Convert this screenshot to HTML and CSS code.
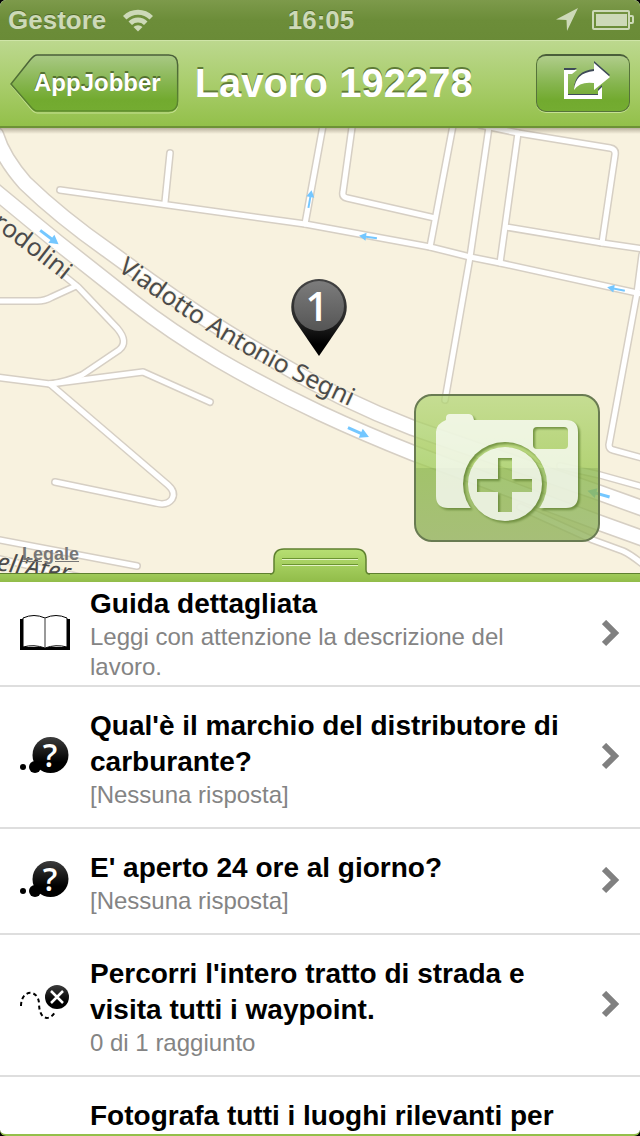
FILE: index.html
```html
<!DOCTYPE html>
<html lang="it">
  <head>
    <meta charset="UTF-8" />
    <meta name="viewport" content="width=device-width, initial-scale=1.0" />
    <title>Lavoro 192278</title>
    <link rel="stylesheet" href="styles.css">
  </head>
  <body>
    <div class="screen">
      <div class="status-bar">
        <div class="status-left">
          <span>Gestore</span>
          <svg class="wifi" width="32" height="24" viewBox="0 0 32 24">
            <path d="M1 8 A21 21 0 0 1 31 8 L27.500 11.500 A16.500 16.500 0 0 0 4.500 11.500 Z" />
            <path d="M6.500 13.500 A13.500 13.500 0 0 1 25.500 13.500 L22 17 A8.500 8.500 0 0 0 10 17 Z" />
            <path d="M11.500 19 A6.500 6.500 0 0 1 20.500 19 L16 23.500 Z" />
          </svg>
        </div>
        <span>16:05</span>
        <div class="status-right">
          <svg width="22" height="24" viewBox="0 0 22 24">
            <path d="M22 0 L11 23 L10.500 12 L0 11.500 Z" />
          </svg>
          <svg width="42" height="20" viewBox="0 0 42 20">
            <path fill-rule="evenodd" d="M2 0 H36 Q38 0 38 2 V18 Q38 20 36 20 H2 Q0 20 0 18 V2 Q0 0 2 0 Z M2 2 V18 H36 V2 Z" />
            <rect x="4" y="4" width="31" height="12" />
            <path d="M38 5 H40 Q42 5 42 7 V12 Q42 14 40 14 H38 V12 H40 V7 H38 Z" />
          </svg>
        </div>
      </div>

      <header class="nav-bar">
        <button class="back-btn" type="button">
          <svg class="back-shape" viewBox="0 0 168 58" preserveAspectRatio="none">
            <defs>
              <linearGradient id="backFill" x1="0" y1="0" x2="0" y2="1">
                <stop offset="0" stop-color="#a9c985" />
                <stop offset="0.5" stop-color="#86b54f" />
                <stop offset="0.8" stop-color="#72aa2f" />
                <stop offset="1" stop-color="#74ac31" />
              </linearGradient>
              <linearGradient id="backEdge" x1="0" y1="0" x2="0" y2="1">
                <stop offset="0" stop-color="#4a5e3a" />
                <stop offset="1" stop-color="#5c8a2c" />
              </linearGradient>
            </defs>
            <path d="M27 2 H158 Q167 2 167 12 V49 Q167 59 158 59 H27 Q24 59 20 54 L1 31 L20 7 Q24 2 27 2 Z" fill="none" stroke="#c6e093" />
            <path d="M27 1 H158 Q167 1 167 11 V47 Q167 57 158 57 H27 Q24 57 20 52 L1 30 L20 6 Q24 1 27 1 Z" fill="url(#backFill)" stroke="url(#backEdge)" stroke-width="1.500" />
          </svg>
          <span>AppJobber</span>
        </button>
        <h1>Lavoro 192278</h1>
        <button class="share-btn" type="button" aria-label="Condividi">
          <svg width="50" height="42" viewBox="558 62 50 42">
            <g fill="#3e4a58">
              <path d="M577 67 L572 71 H568 V93 H598 V88 L602 84 V97 H564 V67 Z" />
              <path d="M594 60 L610 74 L594 88 V80 Q580 79 574 87 Q575 70 594 68 Z" />
            </g>
            <g fill="#fff">
              <path d="M577 69 L572 73 H568 V94 H598 V90 L602 86 V98 H564 V69 Z" />
              <path d="M594 62 L610 76 L594 89 V82 Q580 80 574 89 Q575 72 594 70 Z" />
            </g>
          </svg>
        </button>
      </header>

      <main>
        <section class="map">
          <svg class="map-canvas" viewBox="0 128 640 445">
            <defs>
              <linearGradient id="pinDisc" x1="0" y1="0" x2="0" y2="1">
                <stop offset="0" stop-color="#7c7c7c" />
                <stop offset="1" stop-color="#555" />
              </linearGradient>
              <linearGradient id="pinBody" x1="0" y1="0" x2="0" y2="1">
                <stop offset="0" stop-color="#444" />
                <stop offset="0.500" stop-color="#2a2a2a" />
                <stop offset="0.850" stop-color="#000" />
              </linearGradient>
              <g id="arrow">
                <path d="M-11 0 H5" fill="none" stroke="#74c7ff" stroke-width="3" />
                <path d="M3 -5 L12 0 L3 5 Z" fill="#74c7ff" />
              </g>
              <g id="arrowSmall">
                <path d="M-9 0 H4" fill="none" stroke="#74c7ff" stroke-width="2" />
                <path d="M2 -4 L9 0 L2 4 Z" fill="#74c7ff" />
              </g>
              <g id="streets">
                <path d="M60 190 L305 224 L430 247 L470 257 L500 263 L660 298" />
                <path d="M170 153 L165 202" />
                <path d="M324 120 L305 224" />
                <path d="M353 120 L343 192 Q342 197 347 198 L435 218" />
                <path d="M454 120 L430 247" />
                <path d="M490 120 L470 257 L445 400" />
                <path d="M480 125 L518 133 L610 148 Q616 149 615 155 L602 243" />
                <path d="M518 133 L500 263" />
                <path d="M506 227 L602 243 L650 250" />
                <path d="M642 255 L637 293 L609 445 Q609 449 613 450 L650 460" />
                <path d="M-5 301 H37 Q45 301 52 297 L76 286" />
                <path d="M62 274 L78 287 L117 328 Q129 342 119 350 L82 375 Q66 382 50 384" />
                <path d="M-5 377 L50 384 L143 372 L210 402" />
                <path d="M50 384 L168 485 Q176 492 172 499 Q167 506 156 503 L55 482" />
                <path d="M-5 539 L137 566" />
                <path d="M-5 558 L80 577" />
                <path d="M560 466 L600 475 L650 489" />
                <path d="M520 507 L593 540 L623 551 Q632 555 650 570" />
              </g>
              <g id="viaduct">
                <path d="M-4 135 Q3 158 25 183 Q60 217 110 252 L150 281 Q210 324 277 362 Q340 400 413 428 L600 493 L650 511" />
                <path d="M-5 191 L57 242 L133 302 Q170 331 217 359 Q265 387 320 413 Q365 434 413 453 L600 523 L650 541" />
              </g>
              <path id="nameViaduct" d="M117 270 Q200 330 260 362 Q310 389 380 420" />
              <path id="nameBrodolini" d="M-18 219 Q20 245 90 302" />
            </defs>
            <rect y="128" width="640" height="446" fill="#f8f2df" />
            <use href="#streets" class="street-edge" />
            <use href="#viaduct" class="viaduct-edge" />
            <use href="#streets" class="street" />
            <use href="#viaduct" class="viaduct" />

            <use href="#arrow" transform="translate(49 237) rotate(37)" />
            <use href="#arrow" transform="translate(358 432) rotate(24)" />
            <use href="#arrow" transform="translate(599 494) rotate(196)" />
            <use href="#arrowSmall" transform="translate(310 199) rotate(-80)" />
            <use href="#arrowSmall" transform="translate(368 237) rotate(188)" />
            <use href="#arrowSmall" transform="translate(616 289) rotate(191)" />

            <g class="road-name">
              <text><textPath href="#nameViaduct">Viadotto Antonio Segni</textPath></text>
              <text><textPath href="#nameBrodolini" startOffset="12">rodolini</textPath></text>
              <text class="slanted" transform="translate(-4 570) rotate(9)">ell'Ater</text>
            </g>

            <path d="M319 279 A28 28 0 0 1 343 321 L319 356 L295 321 A28 28 0 0 1 319 279 Z" fill="url(#pinBody)" />
            <circle cx="319" cy="306" r="25" fill="url(#pinDisc)" />
            <text class="pin-number" x="317" y="321">1</text>
          </svg>
          <a class="legal" href="#">Legale</a>
          <button class="camera-btn" type="button" aria-label="Aggiungi foto">
            <svg viewBox="416 396 182 144">
              <mask id="cameraCut" maskUnits="userSpaceOnUse" x="416" y="396" width="182" height="144">
                <rect x="416" y="396" width="182" height="144" fill="#fff" />
                <rect x="533" y="427" width="35" height="22" rx="4" fill="#000" />
                <circle cx="505" cy="484" r="42" fill="#000" />
              </mask>
              <g class="camera">
                <path mask="url(#cameraCut)" d="M436 432 Q436 424 446 420 V418 Q446 414 450 414 H469 Q473 414 474 420 H566 Q578 420 578 432 V496 Q578 508 566 508 H448 Q436 508 436 496 Z" />
                <path fill-rule="evenodd" d="M505 447 A37 37 0 0 1 505 521 A37 37 0 0 1 505 447 Z M498 458 V479 H477 V492 H498 V512 H512 V492 H532 V479 H512 V458 Z" />
              </g>
            </svg>
          </button>
        </section>

        <div class="drawer">
          <button class="handle" type="button" aria-label="Ridimensiona mappa">
            <svg width="100" height="34" viewBox="0 0 100 34">
              <defs>
                <linearGradient id="handleFill" x1="0" y1="0" x2="0" y2="1">
                  <stop offset="0" stop-color="#b7df73" />
                  <stop offset="1" stop-color="#91bc49" />
                </linearGradient>
              </defs>
              <path d="M0 26 Q4 26 4 22 V11 Q4 1 14 1 H86 Q96 1 96 11 V22 Q96 26 100 26 V34 H0 Z" fill="url(#handleFill)" />
              <path d="M0 26 Q4 26 4 22 V11 Q4 1 14 1 H86 Q96 1 96 11 V22 Q96 26 100 26" fill="none" stroke="#5f8030" stroke-width="1.500" />
              <path d="M12 10.500 H88 M12 16.500 H88" stroke="#6b9430" />
              <path d="M12 11.500 H88 M12 17.500 H88" stroke="#e3f2c4" />
            </svg>
          </button>
        </div>

        <ul class="tasks">
          <li>
            <a class="task compact" href="#">
              <svg class="task-icon" viewBox="0 0 50 40">
                <path d="M0 5 H3 V33 H47 V5 H50 V36 H0 Z" />
                <path d="M3 4 Q14 -1 25 4 Q36 -1 47 4 V33 Q36 30 25 34 Q14 30 3 33 Z" fill="#fff" stroke="#000" />
                <path d="M25 4 V33" stroke="#777" stroke-width="1.500" />
              </svg>
              <div class="task-text">
                <h2>Guida dettagliata</h2>
                <p>Leggi con attenzione la descrizione del lavoro.</p>
              </div>
              <svg class="chevron" viewBox="0 0 18 28"><path d="M2 2 L13 13 L2 24" /></svg>
            </a>
          </li>
          <li>
            <a class="task" href="#">
              <svg class="task-icon" viewBox="0 0 50 40">
                <defs>
                  <linearGradient id="bubble" x1="0" y1="0" x2="0" y2="1">
                    <stop offset="0" stop-color="#3c3c3c" />
                    <stop offset="0.700" stop-color="#000" />
                  </linearGradient>
                </defs>
                <circle cx="30.500" cy="18" r="18" fill="url(#bubble)" />
                <circle cx="15" cy="30" r="6" />
                <circle cx="3" cy="30" r="3" />
                <text x="30" y="30">?</text>
              </svg>
              <div class="task-text">
                <h2>Qual'è il marchio del distributore di carburante?</h2>
                <p>[Nessuna risposta]</p>
              </div>
              <svg class="chevron" viewBox="0 0 18 28"><path d="M2 2 L13 13 L2 24" /></svg>
            </a>
          </li>
          <li>
            <a class="task" href="#">
              <svg class="task-icon" viewBox="0 0 50 40">
                <circle cx="30.500" cy="18" r="18" fill="url(#bubble)" />
                <circle cx="15" cy="30" r="6" />
                <circle cx="3" cy="30" r="3" />
                <text x="30" y="30">?</text>
              </svg>
              <div class="task-text">
                <h2>E' aperto 24 ore al giorno?</h2>
                <p>[Nessuna risposta]</p>
              </div>
              <svg class="chevron" viewBox="0 0 18 28"><path d="M2 2 L13 13 L2 24" /></svg>
            </a>
          </li>
          <li>
            <a class="task" href="#">
              <svg class="task-icon" viewBox="0 0 50 40">
                <path d="M1 21 C1 4 18 4 19 18 C19 36 30 36 35 27" fill="none" stroke="#000" stroke-width="2" stroke-dasharray="4 3" />
                <circle cx="37" cy="12" r="12" fill="url(#bubble)" />
                <path d="M31 6 L43 18 M43 6 L31 18" stroke="#fff" stroke-width="2.500" />
              </svg>
              <div class="task-text">
                <h2>Percorri l'intero tratto di strada e visita tutti i waypoint.</h2>
                <p>0 di 1 raggiunto</p>
              </div>
              <svg class="chevron" viewBox="0 0 18 28"><path d="M2 2 L13 13 L2 24" /></svg>
            </a>
          </li>
          <li>
            <a class="task no-icon" href="#">
              <div class="task-text">
                <h2>Fotografa tutti i luoghi rilevanti per</h2>
              </div>
            </a>
          </li>
        </ul>
      </main>
    </div>
  </body>
</html>
```

FILE: styles.css
```css
* {
  box-sizing: border-box;
}

body {
  margin: 0;
  background-color: #000;
  font-family: "Liberation Sans", Arial, sans-serif;
}

button {
  padding: 0;
  border: none;
  background: none;
  font-family: inherit;
  cursor: pointer;
}

svg {
  display: block;
}

.screen {
  display: flex;
  flex-direction: column;
  height: 100vh;
  overflow: hidden;
  background-color: #fff;
  border-bottom: 2px solid #93bf4a;
  border-radius: 6px;
}

/* Status bar */
.status-bar {
  display: grid;
  grid-template-columns: 1fr auto 1fr;
  align-items: center;
  flex: none;
  height: 40px;
  padding: 0 6px 0 8px;
  background: linear-gradient(#7d9a4b, #6c8d39 50%, #6a8b37);
  color: #cdd9b8;
  font-size: 26px;
  font-weight: bold;
  text-shadow: 0 -1px 0 #4f692a;
}

.status-bar svg {
  fill: #cdd9b8;
}

.status-left,
.status-right {
  display: flex;
  align-items: center;
  gap: 16px;
}

.status-right {
  justify-content: flex-end;
  gap: 14px;
}

/* Navigation bar */
.nav-bar {
  display: flex;
  align-items: center;
  flex: none;
  height: 88px;
  padding: 0 10px 1px;
  background: linear-gradient(#bcd88e, #a9cd6c 50%, #93c04a);
  border-top: 1px solid #cfe5a8;
  border-bottom: 2px solid #6d9236;
  color: #fff;
}

.nav-bar h1 {
  flex: 1;
  margin: 0 0 0 16px;
  font-size: 40px;
  line-height: 48px;
  text-shadow: 0 -2px 0 #5f7c37;
  white-space: nowrap;
}

.back-btn {
  position: relative;
  height: 58px;
  padding: 0 18px 0 24px;
  color: #fff;
  font-size: 24px;
  font-weight: bold;
  text-shadow: 0 -2px 0 #53702f;
}

.back-btn span {
  position: relative;
}

.back-shape {
  position: absolute;
  top: 0;
  left: 0;
  width: 100%;
  height: 100%;
  overflow: visible;
}

.share-btn {
  display: flex;
  align-items: center;
  justify-content: center;
  width: 94px;
  height: 58px;
  background: linear-gradient(#b0cd8b, #86b54f 50%, #72aa2f 80%, #74ac31);
  border: 1px solid #56733a;
  border-top: 2px solid #4a5e3a;
  border-radius: 10px;
  box-shadow: 0 1px 0 #c6e093;
}

.share-btn svg {
  overflow: visible;
}

/* Map */
main {
  flex: 1;
  min-height: 0;
}

.map {
  position: relative;
}

.map::before {
  content: "";
  position: absolute;
  top: 0;
  left: 0;
  right: 0;
  height: 6px;
  background: linear-gradient(rgba(90, 80, 60, 0.4), rgba(90, 80, 60, 0));
}

.map-canvas {
  width: 100%;
  height: auto;
}

.street-edge,
.viaduct-edge,
.street,
.viaduct {
  fill: none;
  stroke: #d6cfc4;
  stroke-width: 8px;
  stroke-linecap: round;
  stroke-linejoin: round;
}

.viaduct-edge {
  stroke-width: 17px;
}

.street {
  stroke: #fff;
  stroke-width: 5px;
}

.viaduct {
  stroke: #fff;
  stroke-width: 14px;
}

.road-name {
  fill: #4b4b4b;
  stroke: #f8f2df;
  stroke-width: 2px;
  paint-order: stroke;
  font-family: "Noto Sans", "Open Sans", sans-serif;
  font-size: 25px;
}

.slanted {
  font-style: italic;
}

.pin-number {
  fill: #fff;
  font-family: "Open Sans", sans-serif;
  font-size: 40px;
  font-weight: 600;
  text-anchor: middle;
}

.legal {
  position: absolute;
  left: 22px;
  bottom: 9px;
  color: #777;
  font-size: 18px;
  font-weight: bold;
  line-height: 20px;
}

.camera-btn {
  position: absolute;
  right: 40px;
  bottom: 31px;
  width: 186px;
  height: 148px;
  background: linear-gradient(rgba(180, 214, 120, 0.75), rgba(160, 202, 88, 0.78) 50%, rgba(138, 182, 74, 0.78) 50%, rgba(146, 178, 94, 0.8));
  border: 2px solid #697b52;
  border-radius: 18px;
}

.camera {
  fill: #fff;
  opacity: 0.75;
  filter: drop-shadow(2px 2px 1px #5f8030);
}

/* Drawer between map and tasks */
.drawer {
  position: relative;
  display: flex;
  align-items: flex-end;
  justify-content: center;
  height: 9px;
  background: linear-gradient(#a0ca5a, #91bc49);
  border-top: 1px solid #5f8030;
}

/* Task list */
.tasks {
  margin: 0;
  padding: 0;
  list-style: none;
}

.task {
  display: flex;
  align-items: center;
  gap: 20px;
  padding: 17px 20px;
  border-bottom: 2px solid #dedede;
  color: #000;
  text-decoration: none;
}

.task.compact {
  padding-top: 4px;
  padding-bottom: 3px;
}

.task.no-icon {
  padding-left: 90px;
}

.task-icon {
  flex: none;
  width: 50px;
  height: 40px;
}

.task-icon text {
  fill: #fff;
  font-family: "Open Sans", sans-serif;
  font-size: 32px;
  font-weight: 600;
  text-anchor: middle;
}

.task-text {
  flex: 1;
  padding: 4px 10px 0 0;
}

.compact .task-text {
  padding-top: 0;
}

.task-text h2 {
  margin: 0;
  font-size: 28px;
  line-height: 36px;
}

.task-text p {
  margin: 0;
  color: #848484;
  font-size: 24px;
  line-height: 30px;
}

.chevron {
  flex: none;
  width: 18px;
  height: 28px;
  fill: none;
  stroke: #808080;
  stroke-width: 6px;
}
```
